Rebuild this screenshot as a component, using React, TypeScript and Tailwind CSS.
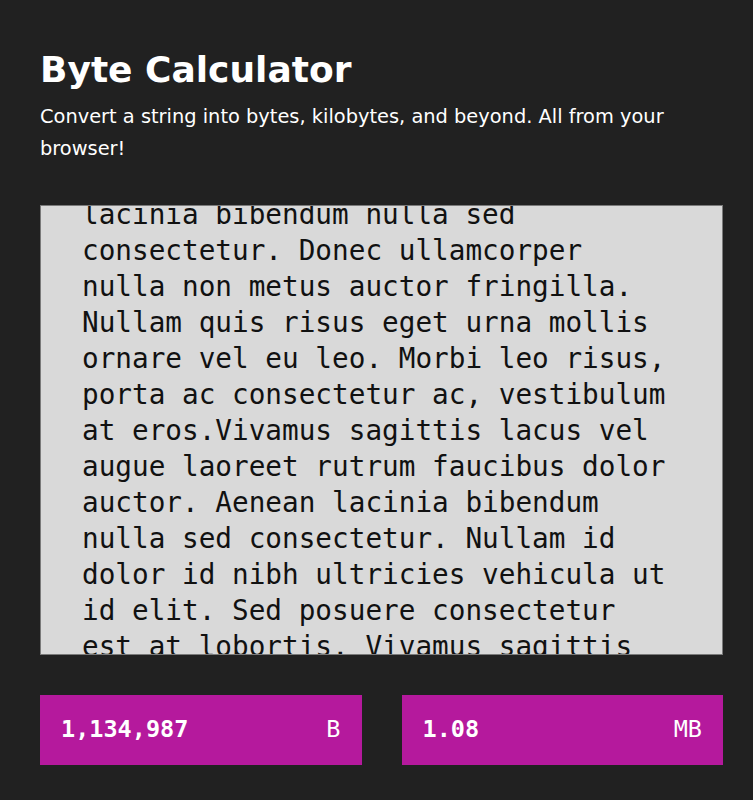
const lines = [
  "lacinia bibendum nulla sed",
  "consectetur. Donec ullamcorper",
  "nulla non metus auctor fringilla.",
  "Nullam quis risus eget urna mollis",
  "ornare vel eu leo. Morbi leo risus,",
  "porta ac consectetur ac, vestibulum",
  "at eros.Vivamus sagittis lacus vel",
  "augue laoreet rutrum faucibus dolor",
  "auctor. Aenean lacinia bibendum",
  "nulla sed consectetur. Nullam id",
  "dolor id nibh ultricies vehicula ut",
  "id elit. Sed posuere consectetur",
  "est at lobortis. Vivamus sagittis",
  "lacus vel augue laoreet rutrum",
];

const ResultBox = ({ value, unit }: { value: string; unit: string }) => {
  return (
    <div className="flex h-[70px] items-center justify-between bg-[#b5199d] px-[21px] font-['DejaVu_Sans_Mono',monospace] text-[23.5px] text-white">
      <span className="font-bold">{value}</span>
      <span>{unit}</span>
    </div>
  );
};

export default function App() {
  return (
    <div className="min-h-screen bg-[#212121] pl-10 pr-[30px] pt-[48px] font-['DejaVu_Sans',sans-serif] text-white">
      <h1 className="text-[36px] font-bold leading-[44px]">Byte Calculator</h1>
      <p className="mt-[9px] text-[19.4px] leading-[32px]">
        Convert a string into bytes, kilobytes, and beyond. All from your
        browser!
      </p>

      <div className="mt-[40px] h-[450px] overflow-hidden border border-[#7a7a7a] bg-[#d9d9d9] px-[41px]">
        <div className="-mt-[9px] whitespace-pre font-['DejaVu_Sans_Mono',monospace] text-[27.7px] leading-[36px] text-[#111111]">
          {lines.map((l, i) => (
            <div key={i}>{l}</div>
          ))}
        </div>
      </div>

      <div className="mt-10 grid grid-cols-2 gap-10">
        <ResultBox value="1,134,987" unit="B" />
        <ResultBox value="1.08" unit="MB" />
      </div>
    </div>
  );
}
